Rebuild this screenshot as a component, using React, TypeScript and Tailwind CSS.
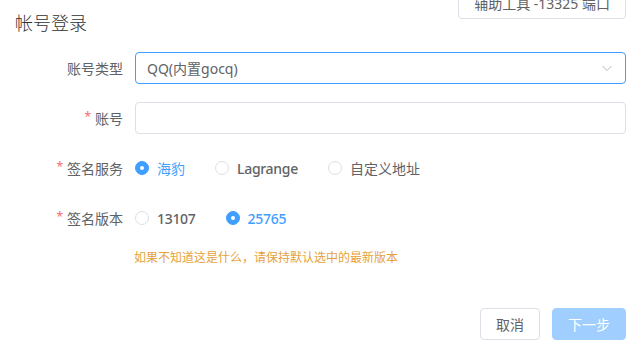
import React from "react";

const font = { fontFamily: '"Noto Sans", "Noto Sans CJK SC", sans-serif' };

function Radio({ checked, label, bold }: { checked?: boolean; label: string; bold?: boolean }) {
  return (
    <label className="mr-[30px] flex items-center">
      <span
        className={
          checked
            ? "flex h-[14px] w-[14px] items-center justify-center rounded-full border border-[#409eff] bg-[#409eff]"
            : "h-[14px] w-[14px] rounded-full border border-[#dcdfe6] bg-white"
        }
      >
        {checked && <span className="h-[4px] w-[4px] rounded-full bg-white" />}
      </span>
      <span
        className={
          "pl-[8px] text-[14px] " +
          (bold ? "font-medium tracking-[-0.3px] " : "font-normal ") +
          (checked ? "text-[#409eff]" : "text-[#606266]")
        }
      >
        {label}
      </span>
    </label>
  );
}

function Label({ text, required }: { text: string; required?: boolean }) {
  return (
    <div className="flex w-[120px] shrink-0 items-center justify-end pr-[12px] text-[14px] text-[#606266]">
      {required && <span className="mr-[4px] -mt-[3px] text-[12px] text-[#f56c6c]">*</span>}
      {text}
    </div>
  );
}

export default function App() {
  return (
    <div className="h-[346px] w-[636px] overflow-hidden bg-white pl-[15px] pr-[10px]" style={font}>
      <div className="flex h-[36px] items-start justify-between">
        <div className="pt-[11px] text-[18px] font-light leading-[24px] text-[#303133]">帐号登录</div>
        <button className="-mt-[13px] h-[32px] rounded-[4px] border border-[#dcdfe6] bg-white px-[15px] text-[14px] text-[#606266]">
          辅助工具 -13325 端口
        </button>
      </div>

      <div className="mt-[16px] flex flex-col gap-[18px]">
        <div className="flex h-[32px]">
          <Label text="账号类型" />
          <div className="flex flex-1 items-center justify-between rounded-[4px] border border-[#409eff] pl-[11px] pr-[12px] text-[14px] text-[#606266]">
            <span>QQ(内置gocq)</span>
            <svg width="12" height="12" viewBox="0 0 12 12" fill="none">
              <path d="M1.5 4 L6 8.5 L10.5 4" stroke="#b5b8be" strokeWidth="1" />
            </svg>
          </div>
        </div>

        <div className="flex h-[32px]">
          <Label text="账号" required />
          <div className="flex-1 rounded-[4px] border border-[#dcdfe6]" />
        </div>

        <div className="flex h-[32px]">
          <Label text="签名服务" required />
          <div className="flex items-center">
            <Radio checked label="海豹" />
            <Radio bold label="Lagrange" />
            <Radio label="自定义地址" />
          </div>
        </div>

        <div className="flex h-[32px]">
          <Label text="签名版本" required />
          <div className="flex items-center">
            <Radio bold label="13107" />
            <Radio bold checked label="25765" />
          </div>
        </div>
      </div>

      <div className="mt-[15px] pl-[119px] text-[12px] leading-[18px] text-[#e6a23c]">
        如果不知道这是什么，请保持默认选中的最新版本
      </div>

      <div className="mt-[41px] flex justify-end gap-[12px]">
        <button className="h-[32px] rounded-[4px] border border-[#dcdfe6] bg-white px-[15px] text-[14px] text-[#606266]">
          取消
        </button>
        <button className="h-[32px] rounded-[4px] border border-[#a0cfff] bg-[#a0cfff] px-[15px] text-[14px] text-white">
          下一步
        </button>
      </div>
    </div>
  );
}
